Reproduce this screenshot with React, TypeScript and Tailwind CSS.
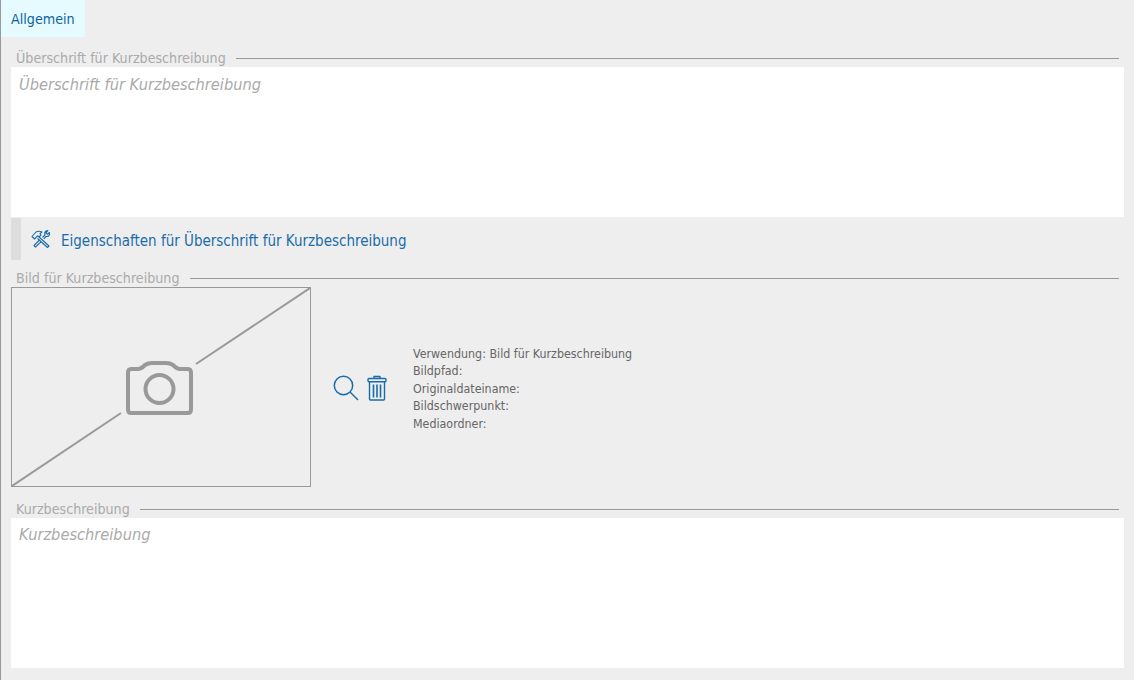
import React from "react";

const font = "font-['DejaVu_Sans',Tahoma,sans-serif] [font-stretch:condensed]";

const Legend = ({ title, className }: { title: string; className: string }) => (
  <div className={`flex items-center pl-[5px] pr-[5px] h-[20px] ${className}`}>
    <span className="text-[14.15px] leading-[20px] text-[#aaaaaa] whitespace-nowrap">{title}</span>
    <div className="flex-1 h-px bg-[#999999] ml-[10px]" />
  </div>
);

const EditBox = ({ placeholder, className }: { placeholder: string; className: string }) => (
  <div className={`h-[150px] bg-white px-2 text-[16.25px] leading-[23px] italic text-[#aaaaaa] ${className}`}>
    {placeholder}
  </div>
);

const ToolsIcon = () => (
  <svg width="20" height="20" viewBox="0 0 20 20" fill="none" stroke="#1a6ca8" strokeWidth="1.1" strokeLinejoin="round">
    <path d="M1 7.5 L5 3 Q8 1.5 11 3 L9 4.5 L10 6 L8 8 L6.5 6.8 L3.5 10 Z" />
    <path d="M8 8 L18 17 L16.5 18.5 L6.5 9.5" />
    <path d="M11.5 8.5 L14 6 Q13 3 15.5 1.8 L17 1.5 L15 3.8 L16.3 5.2 L18.5 3.5 Q19 6.5 16.5 7.5 L15 7.5 L12.8 9.8" />
    <path d="M8.5 11 L3 16.5 L4.5 18 L10 12.8" />
  </svg>
);

const SearchIcon = () => (
  <svg width="26" height="26" viewBox="0 0 26 26" fill="none" stroke="#1a6ca8" strokeWidth="1.5">
    <circle cx="10.5" cy="10.5" r="9.2" />
    <path d="M17 17 L25 25" />
  </svg>
);

const TrashIcon = () => (
  <svg width="20" height="26" viewBox="0 0 20 26" fill="none" stroke="#1a6ca8" strokeWidth="1.4" strokeLinejoin="round">
    <path d="M7 3.5 V1.5 H13 V3.5" />
    <rect x="1" y="3.5" width="18" height="3.2" rx="1" />
    <path d="M2.5 6.7 V24 Q2.5 25 3.5 25 H16.5 Q17.5 25 17.5 24 V6.7" />
    <path d="M6.5 9.5 V22.5 M10 9.5 V22.5 M13.5 9.5 V22.5" strokeWidth="1.6" />
  </svg>
);

const ImagePlaceholder = () => (
  <div className="w-[300px] h-[200px] border border-[#999999] shrink-0">
    <svg width="298" height="198" viewBox="0 0 298 198" fill="none" stroke="#999999" strokeLinejoin="round">
      <path d="M184 76 L298 0 M109 125 L0 198" strokeWidth="2" />
      <path
        d="M119 81 Q116 81 116 85 V121 Q116 125 119 125 H176 Q179 125 179 121 V85 Q179 81 176 81 H168 Q165 81 161 77 Q158 75 154 75 H140 Q136 75 133 77 Q129 81 126 81 Z"
        strokeWidth="4"
      />
      <circle cx="147.5" cy="101" r="14" strokeWidth="4" />
    </svg>
  </div>
);

const infoLines = [
  "Verwendung: Bild für Kurzbeschreibung",
  "Bildpfad:",
  "Originaldateiname:",
  "Bildschwerpunkt:",
  "Mediaordner:",
];

export default function App() {
  return (
    <div className={`w-[1134px] h-[680px] overflow-hidden bg-[#eeeeee] border-l border-[#999999] ${font}`}>
      <div className="w-[84px] h-[37px] bg-[#e5fbff] pl-[10px] text-[14.2px] leading-[38px] text-[#0f64a0]">Allgemein</div>

      <div className="pl-[10px] pr-[10px]">
        <Legend title="Überschrift für Kurzbeschreibung" className="mt-[11px] mb-[-1px]" />
        <EditBox placeholder="Überschrift für Kurzbeschreibung" className="pt-[6px]" />

        <div className="flex items-center h-[42px] mt-px border-l-[10px] border-[#dddddd] pl-[10px] gap-[10px]">
          <ToolsIcon />
          <span className="text-[15px] pt-[4px] text-[#1a6ca8] whitespace-nowrap">Eigenschaften für Überschrift für Kurzbeschreibung</span>
        </div>

        <Legend title="Bild für Kurzbeschreibung" className="mt-[8px] mb-[-1px]" />
        <div className="flex items-center">
          <ImagePlaceholder />
          <div className="flex items-center gap-[8px] ml-[22px] mt-[2px]">
            <SearchIcon />
            <TrashIcon />
          </div>
          <div className="ml-[26px] mt-[5px] text-[12.35px] leading-[17.5px] text-[#666666]">
            {infoLines.map((line) => (
              <div key={line}>{line}</div>
            ))}
          </div>
        </div>

        <Legend title="Kurzbeschreibung" className="mt-[12px] mb-[-1px]" />
        <EditBox placeholder="Kurzbeschreibung" className="pt-[5px]" />
      </div>
    </div>
  );
}
